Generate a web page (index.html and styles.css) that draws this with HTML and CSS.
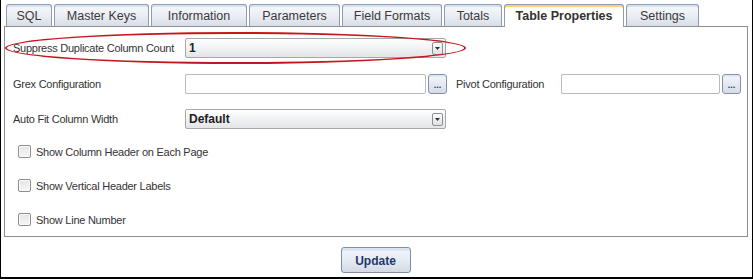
FILE: index.html
```html
<!DOCTYPE html>
<html>
<head>
<meta charset="utf-8">
<link rel="stylesheet" href="styles.css">
</head>
<body>
<div class="frame">
  <div class="tabs">
    <div class="tab w-sql">SQL</div>
    <div class="tab w-mk">Master Keys</div>
    <div class="tab w-info">Information</div>
    <div class="tab w-par">Parameters</div>
    <div class="tab w-ff">Field Formats</div>
    <div class="tab w-tot">Totals</div>
    <div class="tab active w-tp">Table Properties</div>
    <div class="tab w-set">Settings</div>
  </div>
  <div class="panel">
    <div class="row r1">
      <span class="label">Suppress Duplicate Column Count</span>
      <div class="select"><span class="val">1</span><span class="drop"><svg width="5" height="3" viewBox="0 0 5 3"><path d="M0 0H5L2.5 3Z" fill="#333"/></svg></span></div>
    </div>
    <div class="row r2">
      <span class="label">Grex Configuration</span>
      <div class="input grex"></div>
      <div class="dots">...</div>
      <span class="label2">Pivot Configuration</span>
      <div class="input pivot"></div>
      <div class="dots">...</div>
    </div>
    <div class="row r3">
      <span class="label">Auto Fit Column Width</span>
      <div class="select"><span class="val">Default</span><span class="drop"><svg width="5" height="3" viewBox="0 0 5 3"><path d="M0 0H5L2.5 3Z" fill="#333"/></svg></span></div>
    </div>
    <label class="check c1"><span class="box"></span>Show Column Header on Each Page</label>
    <label class="check"><span class="box"></span>Show Vertical Header Labels</label>
    <label class="check"><span class="box"></span>Show Line Number</label>
    <div class="ellipse"></div>
  </div>
  <div class="actions">
    <div class="btn">Update</div>
  </div>
</div>
</body>
</html>
```
FILE: styles.css
```css
* { box-sizing: border-box; }
html, body { margin: 0; padding: 0; background: #fff; }
body { font-family: "Liberation Sans", Arial, sans-serif; color: #333; }
.frame {
  width: 753px; height: 279px;
  border: 1px solid #000; border-top: none; border-bottom-width: 2px;
  padding: 4px 3px 0 3px;
}
.tabs { display: flex; padding-left: 2px; height: 22px; position: relative; z-index: 2; }
.tab {
  height: 22px; margin-right: 2px;
  border: 1px solid #8e9cb0; border-bottom: none; border-radius: 3px 3px 0 0;
  background: linear-gradient(#f7f9fb, #e9edf2 55%, #d8dee7);
  box-shadow: inset 0 2px 0 #d6e2f0;
  font-size: 12.5px; color: #3a3a3a; text-align: center; line-height: 23px;
  white-space: nowrap;
}
.tab.active {
  height: 23px;
  background: linear-gradient(#fffdf3, #ffffff 60%);
  box-shadow: inset 0 2px 0 #f6d37a;
  font-weight: bold; color: #333;
}
.w-sql { width: 46px; }
.w-mk { width: 95px; }
.w-info { width: 96px; }
.w-par { width: 91px; }
.w-ff { width: 100px; }
.w-tot { width: 58px; }
.w-tp { width: 120px; }
.w-set { width: 73px; }
.panel {
  position: relative;
  height: 211px; margin-right: 1px;
  border: 1px solid #8a8e96;
  padding: 11px 0 0 8px;
  display: flex; flex-direction: column;
}
.row { display: flex; align-items: center; height: 20px; font-size: 11px; white-space: nowrap; letter-spacing: -0.25px; }
.r2 { margin-top: 16px; }
.r3 { margin-top: 15px; }
.label { width: 172px; flex: none; }
.select {
  width: 261px; height: 20px; flex: none;
  border: 1px solid #a4a7ab; border-radius: 2px;
  background: linear-gradient(#ffffff, #f1f2f3 50%, #e3e5e7);
  display: flex; align-items: center; justify-content: space-between;
  padding: 0 2px 0 3px;
  font-weight: bold; color: #222; font-size: 12px; letter-spacing: 0;
}
.drop {
  width: 11px; height: 13px; border: 1px solid #8b8e92; border-radius: 2px;
  background: linear-gradient(#fbfbfb, #dfe1e4);
  display: flex; align-items: center; justify-content: center;
}
.input {
  height: 20px; flex: none;
  border: 1px solid #b7babe; border-radius: 2px; background: #fff;
}
.grex { width: 241px; }
.pivot { width: 159px; }
.dots {
  width: 19px; height: 20px; margin-left: 2px; flex: none;
  border: 1px solid #8392a8; border-radius: 3px;
  background: linear-gradient(#f4f7fa, #d6dde7);
  box-shadow: inset 0 2px 0 #dfe8f3;
  color: #1c3a6b; font-weight: bold; font-size: 9px;
  display: flex; align-items: flex-end; justify-content: center;
  line-height: 9px; padding-bottom: 3px; letter-spacing: 0;
}
.label2 { margin-left: 9px; width: 105px; flex: none; }
.check {
  display: flex; align-items: center; height: 13px;
  font-size: 11px; margin-top: 21px; padding-left: 5px; white-space: nowrap;
  letter-spacing: -0.25px;
}
.check.c1 { margin-top: 16px; }
.box {
  width: 13px; height: 13px; margin-right: 5px;
  border: 1px solid #8b8d91; border-radius: 2px;
  background: linear-gradient(#e4e5e7, #f6f6f7);
  box-shadow: inset 0 0 0 1px #fbfbfb;
}
.ellipse {
  position: absolute; left: 0; top: 5px;
  width: 461px; height: 32px;
  border: 2px solid #c4161c; border-radius: 50%;
  pointer-events: none;
}
.actions { display: flex; justify-content: center; padding-top: 10px; padding-right: 2px; }
.btn {
  width: 70px; height: 26px;
  border: 1px solid #7f8ea3; border-radius: 3px;
  background: linear-gradient(#f6f8fb, #e6ebf1 50%, #d3dae4);
  box-shadow: inset 0 3px 0 #d9e5f3;
  color: #1c3a6b; font-weight: bold; font-size: 12px;
  text-align: center; line-height: 26px;
}
```
